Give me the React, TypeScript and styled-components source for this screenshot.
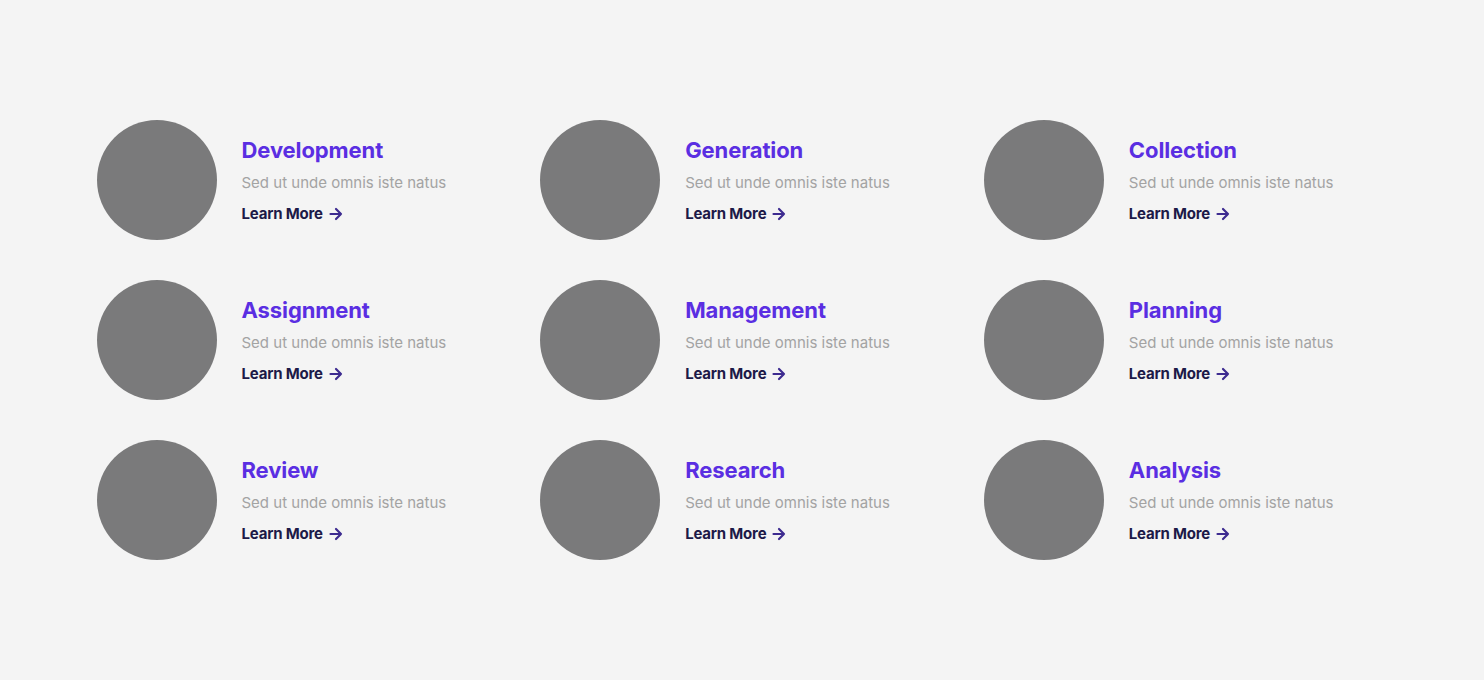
import React from "react";
import styled, { createGlobalStyle } from "styled-components";

const Global = createGlobalStyle`
  html, body { margin: 0; padding: 0; background: #f4f4f4; }
  body { font-family: Inter, "Noto Sans", sans-serif; }
`;

const Page = styled.section`
  background: #f4f4f4;
  min-height: 680px;
  padding-top: 120px;
  box-sizing: border-box;
`;

const Grid = styled.div`
  width: 1331px;
  margin: 0 auto;
  display: grid;
  grid-template-columns: repeat(3, 1fr);
  row-gap: 40px;
`;

const Item = styled.div`
  display: flex;
  align-items: center;
  gap: 25px;
  padding-left: 20px;
`;

const Circle = styled.div`
  width: 120px;
  height: 120px;
  border-radius: 50%;
  background: #7a7a7b;
  flex-shrink: 0;
`;

const Body = styled.div`
  display: flex;
  flex-direction: column;
  align-items: flex-start;
`;

const Title = styled.h3`
  margin: 0;
  font-size: 22px;
  font-weight: 700;
  line-height: 28px;
  letter-spacing: -0.1px;
  color: #5a2ee2;
`;

const Text = styled.p`
  margin: 8px 0 0;
  font-size: 15px;
  line-height: 22px;
  color: #a3a3a3;
  letter-spacing: 0;
`;

const Link = styled.a`
  margin-top: 10px;
  display: inline-flex;
  align-items: center;
  gap: 6px;
  font-size: 15px;
  font-weight: 700;
  line-height: 20px;
  letter-spacing: -0.2px;
  color: #1d1a48;
  text-decoration: none;
  cursor: pointer;
`;

const Arrow = () => (
  <svg width="14" height="14" viewBox="0 0 14 14" fill="none" stroke="#3d2b90" strokeWidth="2.2" strokeLinecap="round" strokeLinejoin="round">
    <path d="M1.5 7h10.5M7 2 12 7l-5 5" />
  </svg>
);

const items = [
  "Development",
  "Generation",
  "Collection",
  "Assignment",
  "Management",
  "Planning",
  "Review",
  "Research",
  "Analysis",
];

export default function App() {
  return (
    <Page>
      <Global />
      <Grid>
        {items.map((t) => (
          <Item key={t}>
            <Circle />
            <Body>
              <Title>{t}</Title>
              <Text>Sed ut unde omnis iste natus</Text>
              <Link>
                Learn More <Arrow />
              </Link>
            </Body>
          </Item>
        ))}
      </Grid>
    </Page>
  );
}
